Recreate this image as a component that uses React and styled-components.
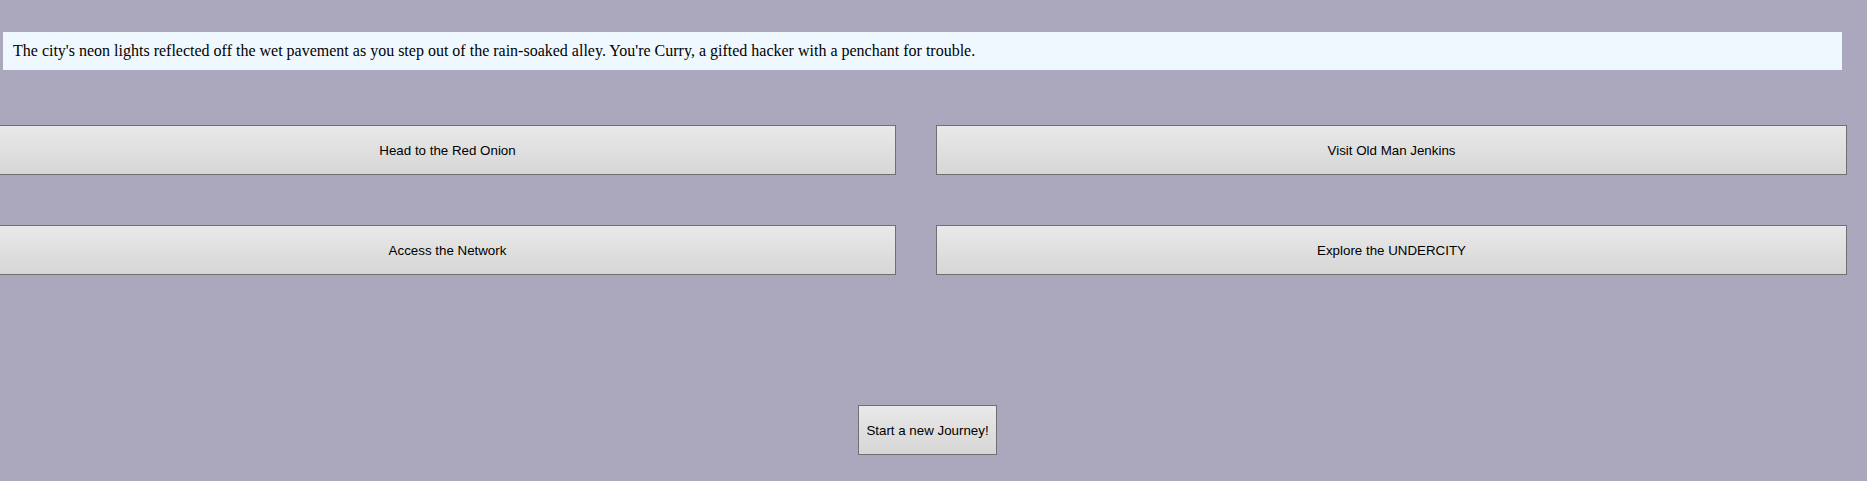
import React from "react";
import styled, { createGlobalStyle } from "styled-components";

const Global = createGlobalStyle`
  html, body { margin: 0; padding: 0; }
  body {
    background: #aba8bd;
    width: 1867px;
    height: 481px;
    overflow: hidden;
    font-family: "Liberation Serif", "Times New Roman", serif;
  }
`;

const Page = styled.div`
  display: flex;
  flex-direction: column;
  padding-top: 32px;
`;

const Story = styled.div`
  margin: 0 25px 0 3px;
  background: #f0f8ff;
  padding: 10px 10px;
  height: 38px;
  box-sizing: border-box;
  font-family: "Liberation Serif", "Times New Roman", serif;
  font-size: 16px;
  line-height: 18px;
  color: #000;
`;

const Choices = styled.div`
  display: grid;
  grid-template-columns: 897px 911px;
  column-gap: 40px;
  row-gap: 50px;
  margin: 55px 0 0 -1px;
`;

const ChoiceButton = styled.button`
  height: 50px;
  box-sizing: border-box;
  border: 1px solid #707070;
  border-radius: 0;
  background: linear-gradient(to bottom, #e9e9e9, #d6d6d6);
  font-family: "Liberation Sans", Arial, sans-serif;
  font-size: 13.33px;
  color: #000;
  padding: 0;
  cursor: pointer;
`;

const Footer = styled.div`
  display: flex;
  margin-top: 130px;
  padding-left: 858px;
`;

const RestartButton = styled(ChoiceButton)`
  width: 139px;
  padding: 0 6px;
`;

const choices = [
  "Head to the Red Onion",
  "Visit Old Man Jenkins",
  "Access the Network",
  "Explore the UNDERCITY",
];

export default function App() {
  return (
    <>
      <Global />
      <Page>
        <Story>
          The city's neon lights reflected off the wet pavement as you step out of the rain-soaked alley. You're Curry, a gifted hacker with a penchant for trouble.
        </Story>
        <Choices>
          {choices.map((c) => (
            <ChoiceButton key={c}>{c}</ChoiceButton>
          ))}
        </Choices>
        <Footer>
          <RestartButton>Start a new Journey!</RestartButton>
        </Footer>
      </Page>
    </>
  );
}
